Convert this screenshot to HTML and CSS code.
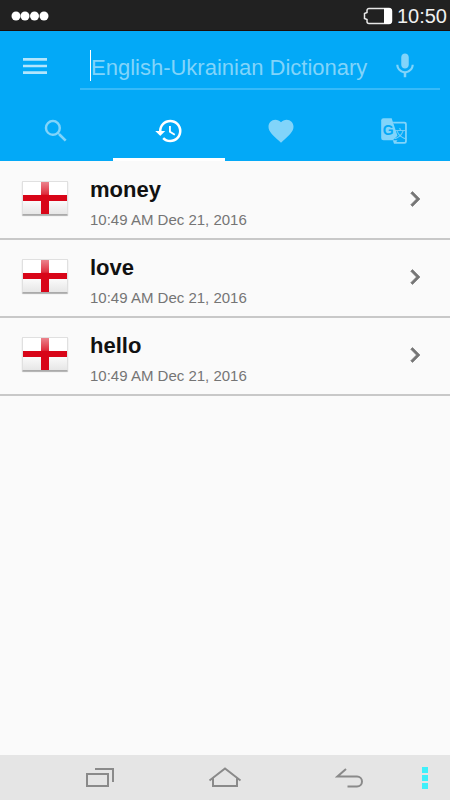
FILE: index.html
```html
<!DOCTYPE html>
<html lang="en">
<head>
    <meta charset="UTF-8">
    <meta name="viewport" content="width=device-width, initial-scale=1.0">
    <title>English-Ukrainian Dictionary</title>
    <link rel="stylesheet" href="styles.css">
</head>
<body>
    <div class="status-bar">
        <svg class="signal" width="38" height="10" viewBox="0 0 38 10">
            <circle cx="5" cy="5" r="4.5"/>
            <circle cx="14" cy="5" r="4.5"/>
            <circle cx="23.5" cy="5" r="4.5"/>
            <circle cx="33" cy="5" r="4.5"/>
        </svg>
        <svg class="battery" width="30" height="18" viewBox="0 0 30 18">
            <path d="M6 1.5h20a2.5 2.5 0 0 1 2.5 2.5v10a2.5 2.5 0 0 1-2.5 2.5H6A2 2 0 0 1 4 14.500V12.500L1.500 11.500V6.500L4 5.500V3.500A2 2 0 0 1 6 1.500z" fill="none" stroke="#e8e8e8" stroke-width="1.5"/>
            <path d="M21 1h5a3 3 0 0 1 3 3v10a3 3 0 0 1-3 3h-5z" fill="#fff"/>
        </svg>
        <span class="clock">10:50</span>
    </div>

    <header class="header">
        <div class="toolbar">
            <button class="menu-button" aria-label="Menu">
                <svg width="32" height="32" viewBox="0 0 24 24"><path d="M3 18h18v-2H3v2zm0-5h18v-2H3v2zm0-7v2h18V6H3z"/></svg>
            </button>
            <div class="search-field">
                <input type="text" id="query" aria-label="Search word" placeholder="English-Ukrainian Dictionary">
                <button class="mic-button" aria-label="Voice input">
                    <svg width="30" height="30" viewBox="0 0 24 24"><path d="M12 14c1.66 0 3-1.34 3-3V5c0-1.66-1.34-3-3-3S9 3.34 9 5v6c0 1.66 1.34 3 3 3zm5.3-3c0 3-2.54 5.1-5.3 5.1S6.7 14 6.7 11H5c0 3.41 2.72 6.23 6 6.72V21h2v-3.28c3.28-.48 6-3.3 6-6.72h-1.7z"/></svg>
                </button>
            </div>
        </div>
        <nav class="tabs">
            <button class="tab" aria-label="Search">
                <svg width="30" height="30" viewBox="0 0 24 24"><path d="M15.5 14h-.79l-.28-.27A6.471 6.471 0 0 0 16 9.5 6.5 6.5 0 1 0 9.5 16c1.61 0 3.09-.59 4.23-1.57l.27.28v.79l5 4.99L20.49 19l-4.99-5zm-6 0C7.01 14 5 11.99 5 9.5S7.01 5 9.5 5 14 7.01 14 9.5 11.99 14 9.5 14z"/></svg>
            </button>
            <button class="tab active" aria-label="History">
                <svg width="30" height="30" viewBox="0 0 24 24"><path d="M13 3a9 9 0 0 0-9 9H1l3.89 3.89.07.14L9 12H6c0-3.87 3.13-7 7-7s7 3.13 7 7-3.13 7-7 7c-1.93 0-3.68-.79-4.94-2.06l-1.42 1.42A8.954 8.954 0 0 0 13 21a9 9 0 0 0 0-18zm-1 5v5l4.28 2.54.72-1.21-3.5-2.08V8H12z"/></svg>
            </button>
            <button class="tab" aria-label="Favorites">
                <svg width="30" height="30" viewBox="0 0 24 24"><path d="M12 21.35l-1.45-1.32C5.4 15.36 2 12.28 2 8.5 2 5.42 4.42 3 7.5 3c1.74 0 3.41.81 4.5 2.09C13.09 3.81 14.76 3 16.5 3 19.58 3 22 5.42 22 8.5c0 3.78-3.4 6.86-8.55 11.54L12 21.35z"/></svg>
            </button>
            <button class="tab" aria-label="Translate">
                <svg width="28" height="28" viewBox="0 0 24 24">
                    <path d="M3 1h7l5 15-4 4H3a2 2 0 0 1-2-2V3a2 2 0 0 1 2-2z"/>
                    <path d="M11 4h10a2 2 0 0 1 2 2v15a2 2 0 0 1-2 2h-9l-1-3h4l-1 1.5h6.5a1 1 0 0 0 1-1v-14a1 1 0 0 0-1-1h-9z"/>
                    <text class="glyph-from" x="7" y="15">G</text>
                    <text class="glyph-to" x="17" y="18">文</text>
                </svg>
            </button>
        </nav>
    </header>

    <main class="history">
        <a class="entry" href="#money">
            <span class="flag"></span>
            <span class="entry-text">
                <span class="word">money</span>
                <span class="date">10:49 AM Dec 21, 2016</span>
            </span>
            <svg class="chevron" width="30" height="30" viewBox="0 0 24 24"><path d="M10 6L8.59 7.41 13.17 12l-4.58 4.59L10 18l6-6z"/></svg>
        </a>
        <a class="entry" href="#love">
            <span class="flag"></span>
            <span class="entry-text">
                <span class="word">love</span>
                <span class="date">10:49 AM Dec 21, 2016</span>
            </span>
            <svg class="chevron" width="30" height="30" viewBox="0 0 24 24"><path d="M10 6L8.59 7.41 13.17 12l-4.58 4.59L10 18l6-6z"/></svg>
        </a>
        <a class="entry" href="#hello">
            <span class="flag"></span>
            <span class="entry-text">
                <span class="word">hello</span>
                <span class="date">10:49 AM Dec 21, 2016</span>
            </span>
            <svg class="chevron" width="30" height="30" viewBox="0 0 24 24"><path d="M10 6L8.59 7.41 13.17 12l-4.58 4.59L10 18l6-6z"/></svg>
        </a>
    </main>

    <footer class="nav-bar">
        <button class="nav-button" aria-label="Recent apps">
            <svg width="30" height="22" viewBox="0 0 30 22"><path d="M2 7h21v12H2zM10 2h18v13"/></svg>
        </button>
        <button class="nav-button" aria-label="Home">
            <svg width="34" height="22" viewBox="0 0 34 22"><path d="M1.5 13.5L17 1.5l15.5 12M5 11.5V19h24v-7.5"/></svg>
        </button>
        <button class="nav-button" aria-label="Back">
            <svg width="30" height="22" viewBox="0 0 30 22"><path d="M12.5 19.5H22a5 5 0 0 0 0-10H2.5L11 2"/></svg>
        </button>
        <button class="more-button" aria-label="More">
            <svg width="6" height="24" viewBox="0 0 6 24"><path d="M0 1h6v6H0zM0 9h6v6H0zM0 17h6v6H0z"/></svg>
        </button>
    </footer>
</body>
</html>
```
FILE: styles.css
```css
* {
    margin: 0;
    padding: 0;
    box-sizing: border-box;
}

body {
    font-family: "Liberation Sans", Arial, sans-serif;
    min-height: 100vh;
    background: #fafafa;
    display: flex;
    flex-direction: column;
}

button {
    background: none;
    border: none;
    cursor: pointer;
    display: flex;
    align-items: center;
    justify-content: center;
}

svg {
    display: block;
}

/* status bar */
.status-bar {
    height: 31px;
    background: #212121;
    border-bottom: 1px solid #1c0d0a;
    display: flex;
    align-items: center;
    padding: 1px 3px 0 11px;
}

.signal {
    fill: white;
    margin-right: auto;
}

.battery {
    margin-right: 4px;
}

.clock {
    font-size: 20px;
    line-height: 28px;
    color: #f0f0f0;
}

/* header */
.header {
    background: #03a9f7;
}

.toolbar {
    height: 70px;
    display: flex;
    align-items: flex-start;
}

.menu-button {
    width: 70px;
    height: 70px;
    margin-right: 10px;
}

.menu-button svg {
    fill: #b3e5fc;
}

.search-field {
    flex: 1;
    height: 59px;
    margin-right: 10px;
    padding: 0 20px 0 10px;
    border-bottom: 2px solid #36baf9;
    display: flex;
    align-items: center;
    justify-content: space-between;
}

.search-field input {
    flex: 1;
    min-width: 0;
    height: 31px;
    margin-top: 12px;
    padding-top: 4px;
    border: none;
    border-left: 1px solid white;
    background: none;
    outline: none;
    font-family: inherit;
    font-size: 22px;
    color: white;
}

.search-field input::placeholder {
    color: #81d4fa;
    opacity: 1;
}

.mic-button svg,
.tab svg {
    fill: #81d4fa;
}

.mic-button {
    margin-top: 12px;
}

.tabs {
    display: flex;
}

.tab {
    flex: 1;
    height: 60px;
    border-top: 3px solid transparent;
    border-bottom: 3px solid transparent;
}

.tab.active {
    border-bottom-color: white;
}

.tab.active svg {
    fill: white;
}

.tab .glyph-from,
.tab .glyph-to {
    fill: #03a9f7;
    text-anchor: middle;
    font-size: 12px;
    font-weight: bold;
}

.tab .glyph-to {
    fill: #81d4fa;
    font-family: "Noto Sans CJK SC", sans-serif;
    font-size: 10px;
    font-weight: normal;
}

/* history list */
.history {
    flex: 1;
    padding-top: 1px;
}

.entry {
    display: flex;
    align-items: flex-start;
    height: 78px;
    padding: 0 20px 0 22px;
    border-bottom: 2px solid #c8c8c8;
    text-decoration: none;
}

.flag {
    width: 46px;
    height: 34px;
    margin-top: 19px;
    margin-right: 22px;
    border: 1px solid #e0e0e0;
    border-bottom-color: #aaa;
    border-radius: 1px;
    box-shadow: 0 1px 1px rgba(0, 0, 0, 0.3);
    background:
        linear-gradient(rgba(255, 255, 255, 0.5), rgba(255, 255, 255, 0.15)) top / 100% 40% no-repeat,
        linear-gradient(#d80518, #d80518) center / 8px 100% no-repeat,
        linear-gradient(#d80518, #d80518) center / 100% 6px no-repeat,
        linear-gradient(#fff 50%, #e6e6e6);
}

.entry-text {
    flex: 1;
    padding-top: 14px;
}

.word,
.date {
    display: block;
}

.word {
    font-size: 22px;
    line-height: 28px;
    font-weight: bold;
    color: #111;
}

.date {
    margin-top: 6px;
    font-size: 15px;
    line-height: 20px;
    color: #757575;
}

.chevron {
    fill: #757575;
    stroke: #757575;
    stroke-width: 0.5;
    margin-top: 22px;
}

/* system navigation */
.nav-bar {
    height: 45px;
    padding: 0 12px 0 38px;
    background: #e5e5e5;
    display: flex;
}

.nav-button {
    flex: 1;
}

.nav-button svg {
    fill: none;
    stroke: #8a8a8a;
    stroke-width: 2;
}

.more-button {
    width: 26px;
}

.more-button svg {
    fill: #40f0fa;
}
```
